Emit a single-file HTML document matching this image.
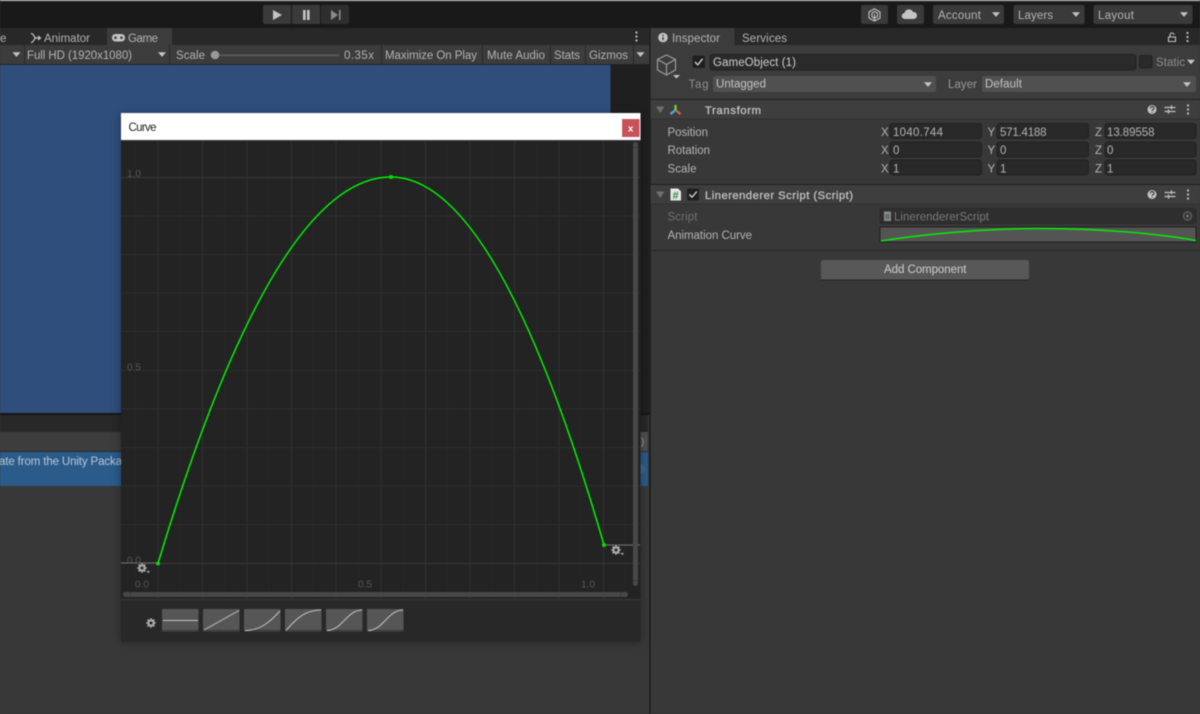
<!DOCTYPE html>
<html><head><meta charset="utf-8"><title>Curve</title>
<style>
html,body{margin:0;padding:0;background:#383838;width:1200px;height:714px;overflow:hidden}
svg{display:block;filter:blur(.4px)}
text{font-family:"Liberation Sans",sans-serif;font-size:11.5px;fill:#b4b4b4;dominant-baseline:auto}
.l{fill:#565656;font-size:10px}
.b{fill:#c4c4c4;font-size:11.2px;stroke:#c4c4c4;stroke-width:.3px}
.a{fill:#c4c4c4}
</style></head><body>
<svg width="1200" height="714" viewBox="0 0 1200 714" xmlns="http://www.w3.org/2000/svg">
<defs>
<filter id="sh" x="-10%" y="-10%" width="120%" height="120%"><feGaussianBlur stdDeviation="5"/></filter>
<g id="tri"><path d="M-4-2.2H4L0 2.4Z" class="a"/></g>
<g id="dots"><circle cx="0" cy="-4" r="1.1" fill="#c4c4c4"/><circle cx="0" cy="0" r="1.1" fill="#c4c4c4"/><circle cx="0" cy="4" r="1.1" fill="#c4c4c4"/></g>
<g id="help"><circle r="4.5" fill="#c4c4c4"/><path d="M-1.7-1.2A1.8 1.8 0 1 1 .2.6V1.3M.2 2.2V3.1" fill="none" stroke="#3c3c3c" stroke-width="1.2"/></g>
<g id="sl"><path d="M-5.5-2H5.5M-5.5 2H5.5M1.5-4.2V-.2M-1.5 0V4.2" stroke="#c4c4c4" stroke-width="1.2" fill="none"/></g>
<g id="gear"><circle r="2.9" fill="none" stroke="#aaa" stroke-width="1.7"/><path d="M0-4.8V4.8M-4.8 0H4.8M-3.4-3.4 3.4 3.4M-3.4 3.4 3.4-3.4" stroke="#aaa" stroke-width="1.6"/><circle r="1.5" fill="#222"/></g>
</defs>

<!-- base -->
<rect width="1200" height="714" fill="#383838"/>
<rect width="1200" height="28" fill="#191919"/>
<rect width="1200" height="1" fill="#d8d8d8"/>

<!-- play -->
<rect x="263" y="5" width="28" height="19" rx="2" fill="#3a3a3a"/>
<rect x="292" y="5" width="28" height="19" fill="#3a3a3a"/>
<rect x="321" y="5" width="28" height="19" rx="2" fill="#2e2e2e"/>
<path d="M273 10V20L282 15Z" fill="#c4c4c4"/>
<path d="M303 10h2.600v10H303ZM307 10h2.600v10H307Z" fill="#c4c4c4"/>
<path d="M331 10V20L338 15Z M339 10h1.600v10H339Z" fill="#8a8a8a"/>

<!-- top-right -->
<rect x="861" y="5" width="27" height="19" rx="2" fill="#3a3a3a"/>
<path d="M874.500 8.800 880 12V18L874.500 21 869 18V12Z M874.500 11.500 877.500 13.200V16.500L874.500 18.200 872 16.800V13.200Z M874.500 14V21" fill="none" stroke="#c4c4c4" stroke-width="1.100"/>
<rect x="897" y="5" width="27" height="19" rx="2" fill="#3a3a3a"/>
<path d="M905 19a3 3 0 0 1-.5-6 4.500 4.500 0 0 1 8.500-1 3.500 3.500 0 0 1 1 7Z" fill="#c4c4c4"/>
<rect x="933" y="5" width="71" height="19" rx="2" fill="#3a3a3a"/>
<text x="938" y="19" textLength="43">Account</text><use href="#tri" x="996" y="14.500"/>
<rect x="1013.500" y="5" width="71" height="19" rx="2" fill="#3a3a3a"/>
<text x="1018" y="19" textLength="35">Layers</text><use href="#tri" x="1076" y="14.500"/>
<rect x="1093.500" y="5" width="99" height="19" rx="2" fill="#3a3a3a"/>
<text x="1098" y="19" textLength="36">Layout</text><use href="#tri" x="1184" y="14.500"/>

<!-- left tabs -->
<rect y="28" width="649" height="17" fill="#282828"/>
<rect x="107" y="28" width="65" height="17" rx="1" fill="#3c3c3c"/>
<text x="0" y="42" textLength="5">e</text>
<path d="M31 33.500C34 33.500 34 38 36 38 M31 42.500C34 42.500 34 38 36 38H40M38 36 40.500 38 38 40" fill="none" stroke="#c4c4c4" stroke-width="1.200"/>
<text x="44" y="42" textLength="46">Animator</text>
<rect x="112" y="34" width="13" height="7.500" rx="3.500" fill="#c4c4c4"/><circle cx="115.500" cy="37.700" r="1.300" fill="#3c3c3c"/><circle cx="121.500" cy="37.700" r="1.300" fill="#3c3c3c"/>
<text x="128" y="42" textLength="30">Game</text>
<use href="#dots" x="636.500" y="36.500"/>

<!-- game toolbar -->
<rect y="45" width="649" height="19.500" fill="#3c3c3c"/>
<rect y="64" width="649" height="1" fill="#232323"/>
<use href="#tri" x="16.500" y="54.500"/>
<rect x="24" y="45" width="1" height="19" fill="#2a2a2a"/>
<text x="27" y="59" textLength="105">Full HD (1920x1080)</text>
<use href="#tri" x="162" y="54.500"/>
<rect x="169" y="45" width="1" height="19" fill="#2a2a2a"/>
<text x="176" y="59" textLength="29">Scale</text>
<rect x="213" y="54.500" width="126" height="1.500" fill="#5f5f5f"/>
<circle cx="215" cy="55" r="4.300" fill="#999"/>
<text x="344" y="59" textLength="30">0.35x</text>
<rect x="381" y="45" width="1" height="19" fill="#2a2a2a"/>
<text x="385" y="59" textLength="92">Maximize On Play</text>
<rect x="482" y="45" width="1" height="19" fill="#2a2a2a"/>
<text x="487" y="59" textLength="58">Mute Audio</text>
<rect x="550" y="45" width="1" height="19" fill="#2a2a2a"/>
<text x="554" y="59" textLength="26">Stats</text>
<rect x="585" y="45" width="1" height="19" fill="#2a2a2a"/>
<text x="589" y="59" textLength="39">Gizmos</text>
<rect x="633" y="45" width="1" height="19" fill="#2a2a2a"/>
<use href="#tri" x="640.500" y="54.500"/>

<!-- game view -->
<rect y="65" width="649" height="348" fill="#1f1f1f"/>
<rect y="65" width="610.500" height="348" fill="#2f4e7b"/>
<rect y="413" width="649" height="2" fill="#151515"/>
<rect y="415" width="649" height="17" fill="#282828"/>
<rect y="432" width="649" height="19" fill="#3d3d3d"/>
<rect x="640" y="432" width="7.500" height="19" fill="#505050"/>
<text x="641" y="445" style="fill:#a0a0a0;font-size:10px">)</text>
<rect y="451" width="649" height="1" fill="#2a2a2a"/>
<rect y="452" width="649" height="34" fill="#2a5b8a"/>
<circle cx="640" cy="469" r="5" fill="#3d6a94"/>
<text x="-1" y="465" textLength="123" style="fill:#bcc8d4">ate from the Unity Packa</text>
<rect x="648" y="415" width="1.300" height="299" fill="#383838"/>
<rect x="649.300" y="28" width="1.300" height="686" fill="#191919"/>

<!-- inspector tabs -->
<rect x="650.500" y="28" width="550" height="17" fill="#282828"/>
<rect x="650.500" y="28" width="84" height="17" rx="1" fill="#3c3c3c"/>
<circle cx="663" cy="37.500" r="4.800" fill="#c4c4c4"/><path d="M663 34.800v1.300M663 37v3.300" stroke="#3c3c3c" stroke-width="1.400"/>
<text x="672" y="42" textLength="48">Inspector</text>
<text x="742" y="42" textLength="45">Services</text>
<path d="M1168.500 37h7v4.500h-7ZM1170 37v-2a2 2 0 0 1 4 0" fill="none" stroke="#c4c4c4" stroke-width="1.100"/>
<use href="#dots" x="1187.500" y="37"/>

<!-- inspector head -->
<rect x="650.500" y="45" width="550" height="54" fill="#3c3c3c"/>
<path d="M666.500 55 675.500 59.500V70L666.500 75 657.500 70V59.500ZM657.500 59.500 666.500 64.500 675.500 59.500M666.500 64.500V75" fill="none" stroke="#a0a0a0" stroke-width="1.100"/>
<path d="M673 75H680L676.500 78.500Z" fill="#c4c4c4"/>
<rect x="692.500" y="55.500" width="12.500" height="12.500" rx="1.500" fill="#1f1f1f"/>
<path d="M695 62 697.800 64.800 702.600 58.800" fill="none" stroke="#d8d8d8" stroke-width="1.300"/>
<rect x="710" y="54.500" width="426" height="15.500" rx="2.500" fill="#2a2a2a" stroke="#212121"/>
<text x="713" y="66" textLength="83" style="fill:#cfcfcf">GameObject (1)</text>
<rect x="1139.500" y="55.500" width="12.500" height="12.500" rx="1.500" fill="#2a2a2a" stroke="#222"/>
<text x="1156" y="66" textLength="29" style="fill:#8d8d8d">Static</text>
<use href="#tri" x="1191" y="62"/>
<text x="688.500" y="88" textLength="20" style="fill:#8f8f8f">Tag</text>
<rect x="713" y="76" width="223" height="16" rx="2" fill="#505050"/>
<text x="716" y="87.500" textLength="50" style="fill:#c4c4c4">Untagged</text>
<use href="#tri" x="928" y="84.500"/>
<text x="948" y="88" textLength="29" style="fill:#9a9a9a">Layer</text>
<rect x="982" y="76" width="214" height="16" rx="2" fill="#505050"/>
<text x="985" y="87.500" textLength="37" style="fill:#c4c4c4">Default</text>
<use href="#tri" x="1187" y="84.500"/>
<rect x="650.500" y="99" width="550" height="1" fill="#1f1f1f"/>

<!-- Transform header -->
<rect x="650.500" y="100" width="550" height="18.500" fill="#3e3e3e"/>
<rect x="650.500" y="118.500" width="550" height="1" fill="#303030"/>
<path d="M656 106.500H664.500L660.200 113Z" fill="#6f6f6f"/>
<path d="M675.500 105V110.500" stroke="#7ecf3a" stroke-width="2.200"/>
<path d="M675 110.500 670.500 114" stroke="#3fb4e0" stroke-width="2.200"/>
<path d="M676 110.500 680.500 114" stroke="#e0603a" stroke-width="2.200"/>
<text x="705" y="114" textLength="56" class="b">Transform</text>
<use href="#help" x="1152" y="109.500"/><use href="#sl" x="1170" y="109.500"/><use href="#dots" x="1188" y="109.500"/>

<!-- transform rows -->
<text x="667.500" y="136" textLength="40.500">Position</text>
<text x="667.500" y="154" textLength="42.500">Rotation</text>
<text x="667.500" y="172.500" textLength="29">Scale</text>
<text x="881" y="136" textLength="7">X</text><text x="987.500" y="136" textLength="7">Y</text><text x="1095" y="136" textLength="7">Z</text>
<text x="881" y="154" textLength="7">X</text><text x="987.500" y="154" textLength="7">Y</text><text x="1095" y="154" textLength="7">Z</text>
<text x="881" y="172.500" textLength="7">X</text><text x="987.500" y="172.500" textLength="7">Y</text><text x="1095" y="172.500" textLength="7">Z</text>
<g fill="#292929" stroke="#212121">
<rect x="890" y="123.500" width="91.500" height="15" rx="2.500"/><rect x="997" y="123.500" width="91.500" height="15" rx="2.500"/><rect x="1105" y="123.500" width="91" height="15" rx="2.500"/>
<rect x="890" y="142" width="91.500" height="15" rx="2.500"/><rect x="997" y="142" width="91.500" height="15" rx="2.500"/><rect x="1105" y="142" width="91" height="15" rx="2.500"/>
<rect x="890" y="160" width="91.500" height="15" rx="2.500"/><rect x="997" y="160" width="91.500" height="15" rx="2.500"/><rect x="1105" y="160" width="91" height="15" rx="2.500"/>
</g>
<text x="893" y="136" textLength="50">1040.744</text><text x="1000" y="136" textLength="46.500">571.4188</text><text x="1107" y="136" textLength="47.500">13.89558</text>
<text x="893" y="154">0</text><text x="1000" y="154">0</text><text x="1107" y="154">0</text>
<text x="893" y="172.500">1</text><text x="1000" y="172.500">1</text><text x="1107" y="172.500">1</text>
<rect x="650.500" y="184" width="550" height="1" fill="#1f1f1f"/>

<!-- script header -->
<rect x="650.500" y="185" width="550" height="18.500" fill="#3e3e3e"/>
<rect x="650.500" y="203.500" width="550" height="1" fill="#303030"/>
<path d="M656 191.500H664.500L660.200 198Z" fill="#6f6f6f"/>
<path d="M670.500 188.500H678L681 191.500V200.500H670.500Z" fill="#e8e8e8"/>
<text x="672.500" y="198.800" style="fill:#2f8a4a;font-size:11px;font-weight:bold">#</text>
<rect x="687" y="188.500" width="12" height="12" rx="1.500" fill="#1f1f1f"/>
<path d="M689.300 194.500 692 197.200 696.800 191.500" fill="none" stroke="#d8d8d8" stroke-width="1.300"/>
<text x="705" y="199" textLength="148" class="b">Linerenderer Script (Script)</text>
<use href="#help" x="1152" y="194.500"/><use href="#sl" x="1170" y="194.500"/><use href="#dots" x="1188" y="194.500"/>

<!-- script rows -->
<text x="667.500" y="220.500" textLength="30" style="fill:#6f6f6f">Script</text>
<rect x="880" y="208.500" width="316" height="15" rx="2" fill="#2e2e2e" stroke="#2a2a2a"/>
<path d="M884 211.500H891V221H884Z" fill="#8a8a8a"/><path d="M885.500 214h4v5h-4Z" fill="#5f6f62"/>
<text x="894" y="220.500" textLength="95" style="fill:#7a7a7a">LinerendererScript</text>
<circle cx="1187.500" cy="216" r="4" fill="none" stroke="#777" stroke-width="1"/><circle cx="1187.500" cy="216" r="1.500" fill="#777"/>
<text x="667.500" y="239" textLength="84.500">Animation Curve</text>
<rect x="880" y="227" width="316" height="15" fill="#545454" stroke="#202020" stroke-width="1"/>
<path d="M881 241 C 925 234 985 228.500 1040 228.500 C 1095 228.500 1155 233 1196 240.500" fill="none" stroke="#00f000" stroke-width="1.400"/>
<rect x="650.500" y="250" width="550" height="1" fill="#252525"/>

<!-- add component -->
<rect x="821" y="260" width="208" height="20" rx="2.500" fill="#585858"/>
<rect x="821" y="279.500" width="208" height="1" fill="#242424"/>
<text x="884" y="273" textLength="82.500" style="fill:#d0d0d0">Add Component</text>

<!-- dialog shadow -->
<rect x="121" y="115" width="519.500" height="527" fill="#000" opacity=".35" filter="url(#sh)"/>

<!-- dialog -->
<rect x="121" y="113" width="519.500" height="529" fill="#282828"/>
<rect x="121" y="113" width="519.500" height="27" fill="#fff"/>
<rect x="121" y="140" width="519.500" height="1" fill="#3a3a3a"/>
<text x="128.500" y="131" textLength="28" style="fill:#222;font-size:11.500px">Curve</text>
<rect x="622" y="119" width="17.500" height="18" fill="#c8525a"/>
<text x="628" y="131.500" style="fill:#fff;font-size:9.500px;font-weight:bold">x</text>

<!-- graph -->
<rect x="121" y="141" width="519.500" height="458" fill="#232323"/>
<g stroke="#272727" stroke-width="1">
<path d="M135.500 141V599M180 141V599M224.500 141V599M269 141V599M313.500 141V599M358.500 141V599M403 141V599M447.500 141V599M492 141V599M536.500 141V599M581 141V599M625.500 141V599"/>
</g>
<g stroke="#303030" stroke-width="1">
<path d="M158 141V599M202.500 141V599M247 141V599M291.500 141V599M336 141V599M381 141V599M425.500 141V599M470 141V599M514.500 141V599M559 141V599M603.500 141V599"/>
</g>
<path d="M121 216H640M121 254.500H640M121 293H640M121 331.500H640M121 409H640M121 447.500H640M121 486H640M121 524.500H640M121 370.500H640" stroke="#2d2d2d" stroke-width="1"/>
<path d="M121 177.500H640M158 563.500H640" stroke="#3a3a3a" stroke-width="1"/>
<path d="M121 563H157M606 545H640" stroke="#6a6a6a" stroke-width="1.300"/>
<text x="127" y="177" class="l">1.0</text>
<text x="127" y="370.500" class="l">0.5</text>
<text x="127" y="563.500" class="l">0.0</text>
<text x="135" y="587.500" class="l">0.0</text>
<text x="358" y="587.500" class="l">0.5</text>
<text x="581" y="587.500" class="l">1.0</text>

<!-- curve -->
<path d="M158 563.500Q274.500 177 391 177Q497.500 177 604 545" fill="none" stroke="#00f400" stroke-width="1.500"/>
<circle cx="158" cy="563.500" r="2" fill="#00e000"/>
<circle cx="391" cy="177" r="2" fill="#00e000"/>
<circle cx="604" cy="545" r="2" fill="#00e000"/>

<use href="#gear" x="142" y="568"/><path d="M146.500 571h3.500l-1.700 2.200Z" fill="#aaa"/>
<use href="#gear" x="616" y="550"/><path d="M620.500 553h3.500l-1.700 2.200Z" fill="#aaa"/>

<!-- scrollbars -->
<rect x="633" y="142" width="5" height="444" rx="2.500" fill="#484848"/>
<rect x="633" y="147" width="5" height="1" fill="#3a3a3a"/><rect x="633" y="580" width="5" height="1" fill="#3a3a3a"/>
<rect x="123" y="592" width="505" height="5" rx="2.500" fill="#484848"/>
<rect x="130" y="592" width="1" height="5" fill="#3a3a3a"/><rect x="620" y="592" width="1" height="5" fill="#3a3a3a"/>
<rect x="121" y="599" width="519.500" height="1" fill="#3a3a3a"/>

<!-- footer -->
<use href="#gear" x="151" y="623"/>
<g fill="#565656">
<rect x="162" y="609" width="36.500" height="21"/><rect x="203" y="609" width="36.500" height="21"/><rect x="244" y="609" width="36.500" height="21"/><rect x="285" y="609" width="36.500" height="21"/><rect x="326" y="609" width="36.500" height="21"/><rect x="367" y="609" width="36.500" height="21"/>
</g>
<g fill="#4a4a4a">
<rect x="162" y="630.500" width="36.500" height="1"/><rect x="203" y="630.500" width="36.500" height="1"/><rect x="244" y="630.500" width="36.500" height="1"/><rect x="285" y="630.500" width="36.500" height="1"/><rect x="326" y="630.500" width="36.500" height="1"/><rect x="367" y="630.500" width="36.500" height="1"/>
</g>
<g fill="none" stroke="#c4c4c4" stroke-width="1">
<path d="M163 620.500H198"/>
<path d="M204 630 239 610.500"/>
<path d="M245 630.500C260 630.500 270 622 280 611"/>
<path d="M286 630.500C296 619 305 610 321 610"/>
<path d="M327 630.500C342 630.500 347 610 362 610"/>
<path d="M368 630.500C383 630.500 388 610 403 610"/>
</g>
</svg>
</body></html>
